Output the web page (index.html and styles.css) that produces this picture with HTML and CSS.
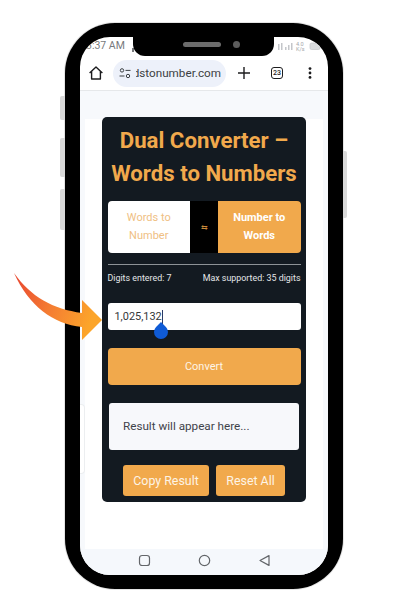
FILE: index.html
```html
<!DOCTYPE html>
<html lang="en">
<head>
<meta charset="utf-8">
<title>Dual Converter</title>
<link rel="stylesheet" href="styles.css">
</head>
<body>
<div class="stage">
  <div class="phone">
    <span class="side side-a"></span>
    <span class="side side-b"></span>
    <span class="side side-c"></span>
    <span class="side side-d"></span>
    <div class="notch"><span class="speaker"></span><span class="camera"></span></div>
    <div class="screen">
      <div class="status">
        <div class="status-left"><span class="time">3:37 AM</span><span class="tick"></span></div>
        <svg class="status-icons" width="44" height="11" viewBox="0 0 44 11">
          <g fill="#c4c6ca">
            <rect x="1" y="3" width="1.5" height="6"/><rect x="4" y="2" width="1.5" height="7"/>
            <rect x="8" y="6" width="1.5" height="3"/><rect x="11" y="4" width="1.5" height="5"/><rect x="14" y="2" width="1.5" height="7"/>
          </g>
          <text x="19" y="4.5" class="speed">4.0</text>
          <text x="19" y="9.5" class="speed">K/s</text>
          <rect x="33" y="2" width="10" height="6.5" rx="1.5" fill="#d9dbdd" stroke="#c4c6ca" stroke-width=".7"/>
        </svg>
      </div>
      <div class="toolbar">
        <svg class="home" width="16" height="16" viewBox="0 0 16 16"><path d="M1.6 8 8 2l6.4 6M3.6 6.6V14h8.8V6.6" fill="none" stroke="#1c1c1e" stroke-width="1.4" stroke-linejoin="round"/></svg>
        <div class="pill">
          <svg width="12" height="11" viewBox="0 0 12 11"><g fill="none" stroke="#3c4043" stroke-width="1"><circle cx="3" cy="2.4" r="1.7"/><path d="M6.5 2.4h5M.5 8h5"/><circle cx="9" cy="8" r="1.7"/></g></svg>
          <div class="url"><span>wordstonumber.com</span></div>
        </div>
        <svg class="plus" width="14" height="14" viewBox="0 0 14 14"><path d="M7 1v12M1 7h12" stroke="#1c1c1e" stroke-width="1.4"/></svg>
        <span class="tabs">23</span>
        <svg class="dots" width="4" height="12" viewBox="0 0 4 12"><g fill="#1c1c1e"><circle cx="2" cy="1.6" r="1.4"/><circle cx="2" cy="6" r="1.4"/><circle cx="2" cy="10.4" r="1.4"/></g></svg>
      </div>
      <div class="page">
        <span class="ghost"></span>
        <main class="card">
          <h1 class="title">Dual Converter – Words to Numbers</h1>
          <div class="modes">
            <button class="mode mode-off">Words to Number</button>
            <span class="swap">⇆</span>
            <button class="mode mode-on">Number to Words</button>
          </div>
          <hr class="rule">
          <div class="meta"><span>Digits entered: 7</span><span>Max supported: 35 digits</span></div>
          <div class="field"><span class="value">1,025,132</span><span class="handle"></span></div>
          <button class="convert">Convert</button>
          <div class="result">Result will appear here...</div>
          <div class="actions">
            <button class="action action-copy">Copy Result</button>
            <button class="action action-reset">Reset All</button>
          </div>
        </main>
      </div>
      <nav class="navbar">
        <svg width="13" height="13" viewBox="0 0 13 13"><rect x="1.5" y="1.5" width="10" height="10" rx="2.6" fill="none" stroke="#63666a" stroke-width="1.2"/></svg>
        <svg width="13" height="13" viewBox="0 0 13 13"><circle cx="6.5" cy="6.5" r="5.2" fill="none" stroke="#63666a" stroke-width="1.2"/></svg>
        <svg width="13" height="13" viewBox="0 0 13 13"><path d="M11 1.6v9.8L2 6.5z" fill="none" stroke="#63666a" stroke-width="1.2" stroke-linejoin="round"/></svg>
      </nav>
    </div>
  </div>
  <svg class="arrow" width="100" height="72" viewBox="0 0 100 72">
    <defs><linearGradient id="ag" x1="0" y1="0" x2="1" y2=".3"><stop offset="0" stop-color="#e8452f"/><stop offset=".5" stop-color="#f47b33"/><stop offset="1" stop-color="#fca52a"/></linearGradient></defs>
    <path d="M3 3C20 27 42 39 71 43V30L91 50 71 70V57C42 54 18 36 3 3Z" fill="url(#ag)"/>
  </svg>
</div>
</body>
</html>
```
FILE: styles.css
```css
* { box-sizing: border-box; }
html, body { margin: 0; padding: 0; background: #fff; }
body { width: 408px; height: 612px; overflow: hidden; font-family: Roboto, "Liberation Sans", sans-serif; }
.stage { position: relative; width: 408px; height: 612px; padding: 23px 0 0 65px; }
.phone { position: relative; width: 278px; height: 566px; background: #000; border-radius: 50px; padding: 14px 15px; box-shadow: 0 0 0 1px #e4e4e4; }
.side { position: absolute; background: #d9d9d9; border-radius: 2px 0 0 2px; width: 5px; left: -5px; }
.side-a { top: 73px; height: 24px; }
.side-b { top: 115px; height: 39px; }
.side-c { top: 166px; height: 41px; }
.side-d { left: 278px; top: 128px; height: 67px; width: 4px; border-radius: 0 2px 2px 0; }
.notch { position: absolute; z-index: 2; top: 14px; left: 68px; width: 141px; height: 19px; background: #000; border-radius: 0 0 12px 12px; display: flex; align-items: center; padding: 0 0 5px 50px; gap: 12px; }
.speaker { width: 38px; height: 5px; border-radius: 3px; background: #6b6b6b; }
.camera { width: 7px; height: 7px; border-radius: 50%; background: #5c5c5c; }
.screen { height: 538px; background: #fff; border-radius: 30px; overflow: hidden; display: flex; flex-direction: column; position: relative; }
.status { height: 15px; display: flex; justify-content: space-between; align-items: flex-end; padding: 0 7px 0 6px; flex: none; }
.status-left { display: flex; align-items: flex-end; gap: 7px; }
.time { font-size: 10.5px; line-height: 12px; color: #77797c; }
.tick { width: 2px; height: 4px; background: #77797c; }
.speed { font-size: 5.5px; fill: #a4a6a9; font-family: Roboto, sans-serif; }
.toolbar { height: 39px; flex: none; display: flex; align-items: center; padding: 4px 0 0 8px; border-bottom: 1px solid #e6e8ea; }
.home { flex: none; }
.pill { width: 113px; height: 27px; margin-left: 9px; background: #edf1fa; border-radius: 14px; display: flex; align-items: center; padding: 0 5px 0 6px; gap: 5px; flex: none; }
.pill svg { flex: none; }
.url { flex: 1; overflow: hidden; display: flex; justify-content: flex-end; white-space: nowrap; font-size: 11.7px; color: #3c4043; }
.plus { margin-left: 11px; flex: none; }
.tabs { margin-left: 20px; width: 12px; height: 12px; flex: none; border: 1.3px solid #1c1c1e; border-radius: 3px; font-size: 7px; line-height: 10px; text-align: center; color: #1c1c1e; font-weight: 500; }
.dots { margin-left: 25px; flex: none; }
.page { flex: 1; background: #f7f9fc; position: relative; padding: 26px 22px 47px; min-height: 0; }
.page::before { content: ""; position: absolute; left: 5px; right: 5px; top: 28px; bottom: 0; background: #fff; }
.ghost { position: absolute; left: 0; top: 313px; width: 5px; height: 70px; background: #fff; border: 1px solid #eceef0; border-left: 0; border-radius: 0 4px 4px 0; z-index: 1; }
.card { position: relative; width: 204px; height: 385px; background: #131a21; border-radius: 5px; padding: 7px 5.5px 0; display: flex; flex-direction: column; }
.title { margin: 0; flex: none; font-size: 22.2px; line-height: 33px; font-weight: 700; color: #f1a94c; text-align: center; }
.modes { margin: 11px 0 0; height: 52px; flex: none; display: flex; border-radius: 4px; overflow: hidden; background: #000; }
.mode { flex: 1; border: 0; padding: 0 8px; font: inherit; font-size: 11px; line-height: 18px; }
.mode-off { background: #fff; color: #efc083; }
.mode-on { background: #f1a94c; color: #fff; font-weight: 700; }
.swap { width: 28px; flex: none; display: flex; align-items: center; justify-content: center; font-size: 8px; color: #c98a3a; }
.rule { margin: 11px 0 0; border: 0; height: 1px; flex: none; background: #8d9296; }
.meta { margin-top: 7px; flex: none; display: flex; justify-content: space-between; font-size: 8.9px; line-height: 13px; color: #e4e6e8; }
.field { position: relative; margin-top: 18px; height: 27px; flex: none; background: #fff; border-radius: 3px; padding-left: 7px; font-size: 10.9px; line-height: 27px; color: #33363a; }
.value { border-right: 1px solid #2a3a66; padding-bottom: 2px; }
.handle { position: absolute; left: 46px; top: 22px; width: 14px; height: 14px; background: #0f5bd6; border-radius: 50% 0 50% 50%; transform: rotate(-45deg); }
.convert { margin-top: 18px; height: 37px; flex: none; border: 0; border-radius: 4px; background: #f1a94c; color: #fdf4e6; font: inherit; font-size: 11px; }
.result { margin: 18px 1.5px 0; height: 47px; flex: none; background: #f7f8fb; border-radius: 3px; padding: 0 14px; font-size: 11.7px; line-height: 46px; color: #3f434a; }
.actions { margin-top: 15px; flex: none; display: flex; justify-content: center; gap: 7px; }
.action { height: 31px; border: 0; border-radius: 3px; padding: 0; background: #f1a94c; color: #fdf4e6; font: inherit; font-size: 12.4px; }
.action-copy { width: 86px; }
.action-reset { width: 69px; }
.navbar { height: 26px; flex: none; background: #f5f8fc; display: flex; justify-content: center; align-items: center; gap: 47px; padding-bottom: 4px; position: relative; }
.arrow { position: absolute; left: 11px; top: 270px; }
```
